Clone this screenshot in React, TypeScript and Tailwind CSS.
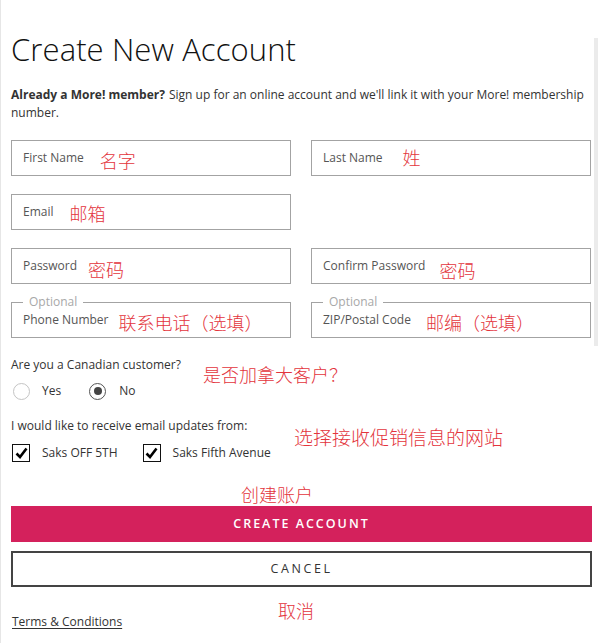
const body = { fontFamily: '"Open Sans", "Liberation Sans", sans-serif' };
const cjk = { fontFamily: '"Noto Sans CJK SC", "Noto Sans", sans-serif' };

function Note({ text, className = '' }: { text: string; className?: string }) {
  return (
    <span style={cjk} className={`text-[18px] leading-none font-light text-[#e3343c] whitespace-nowrap ${className}`}>
      {text}
    </span>
  );
}

function Field({ label, note, noteClass = '', optional = false }: { label: string; note?: string; noteClass?: string; optional?: boolean }) {
  return (
    <div className="relative flex h-[36px] w-[280px] items-center border border-[#a3a3a3] pl-[11px]">
      {optional && (
        <span className="absolute -top-[9px] left-[11px] bg-white px-[6px] text-[12px] leading-[16px] text-[#a8a8a8]">
          Optional
        </span>
      )}
      <span className="text-[12px] text-[#555]">{label}</span>
      {note && <Note text={note} className={noteClass} />}
    </div>
  );
}

function Radio({ checked }: { checked?: boolean }) {
  return (
    <span
      className={`flex h-[17px] w-[17px] items-center justify-center rounded-full border ${
        checked ? 'border-[#555]' : 'border-[#c4c4c4]'
      }`}
    >
      {checked && <span className="h-[8px] w-[8px] rounded-full bg-[#444]" />}
    </span>
  );
}

function Check() {
  return (
    <span className="flex h-[18px] w-[18px] items-center justify-center border-[1.5px] border-[#111]">
      <svg width="13" height="12" viewBox="0 0 13 12">
        <path d="M1.5 6.5 L5 10 L11.5 1.5" fill="none" stroke="#000" strokeWidth="2.6" />
      </svg>
    </span>
  );
}

export default function App() {
  return (
    <div style={body} className="relative min-h-[643px] w-[599px] border-l border-[#e6e6e6] bg-white pl-[10px] pr-[7px] text-[#333]">
      <div className="absolute right-[1px] top-[38px] h-[308px] w-[4px] bg-[#ebebeb]" />

      <h1 className="pt-[31px] text-[31px] font-light leading-[36px] tracking-[0.1px] text-[#111]">
        Create New Account
      </h1>

      <p className="mt-[19px] text-[12px] leading-[18px] text-[#333]">
        <b className="mr-[4px] font-bold">Already a More! member?</b>
        Sign up for an online account and we'll link it with your More! membership number.
      </p>

      <div className="mt-[18px] flex flex-col gap-[18px]">
        <div className="flex gap-[20px]">
          <Field label="First Name" note="名字" noteClass="ml-[16px] mt-[4px]" />
          <Field label="Last Name" note="姓" noteClass="ml-[20px] -mt-[2px]" />
        </div>
        <div className="flex">
          <Field label="Email" note="邮箱" noteClass="ml-[16px] mt-[2px]" />
        </div>
        <div className="flex gap-[20px]">
          <Field label="Password" note="密码" noteClass="ml-[11px] mt-[6px]" />
          <Field label="Confirm Password" note="密码" noteClass="ml-[14px] mt-[8px]" />
        </div>
        <div className="flex gap-[20px]">
          <Field label="Phone Number" note="联系电话（选填）" noteClass="ml-[10px] mt-[4px]" optional />
          <Field label="ZIP/Postal Code" note="邮编（选填）" noteClass="ml-[15px] mt-[4px]" optional />
        </div>
      </div>

      <div className="relative">
        <p className="mt-[18px] text-[12px] leading-[18px]">Are you a Canadian customer?</p>
        <div className="mt-[7px] flex h-[20px] items-center pl-[2px] text-[12px]">
          <Radio />
          <span className="ml-[12px]">Yes</span>
          <span className="ml-[28px]"><Radio checked /></span>
          <span className="ml-[13px]">No</span>
        </div>
        <Note text="是否加拿大客户？" className="absolute left-[192px] top-[9px]" />
      </div>

      <div className="relative">
        <p className="mt-[16px] text-[12px] leading-[18px]">I would like to receive email updates from:</p>
        <div className="mt-[9px] flex h-[18px] items-center pl-[1px] text-[12px]">
          <Check />
          <span className="ml-[12px]">Saks OFF 5TH</span>
          <span className="ml-[25px]"><Check /></span>
          <span className="ml-[12px]">Saks Fifth Avenue</span>
        </div>
        <Note text="选择接收促销信息的网站" className="absolute left-[283px] top-[10px] text-[19px]" />
      </div>

      <div className="relative pt-[44px]">
        <Note text="创建账户" className="absolute left-[230px] top-[23px]" />
        <button className="flex h-[36px] w-[581px] items-center justify-center bg-[#d4215c] text-[12.5px] font-semibold tracking-[2px] text-white">
          CREATE ACCOUNT
        </button>
        <button className="mt-[9px] flex h-[36px] w-[581px] items-center justify-center border-2 border-[#444] text-[12.5px] tracking-[2.6px] text-[#333]">
          CANCEL
        </button>
        <Note text="取消" className="absolute left-[267px] top-[139px]" />
      </div>

      <p className="mt-[26px] pl-[1px] text-[12px] leading-[18px]">
        <span className="underline underline-offset-2 text-[#333]">Terms &amp; Conditions</span>
      </p>
    </div>
  );
}
